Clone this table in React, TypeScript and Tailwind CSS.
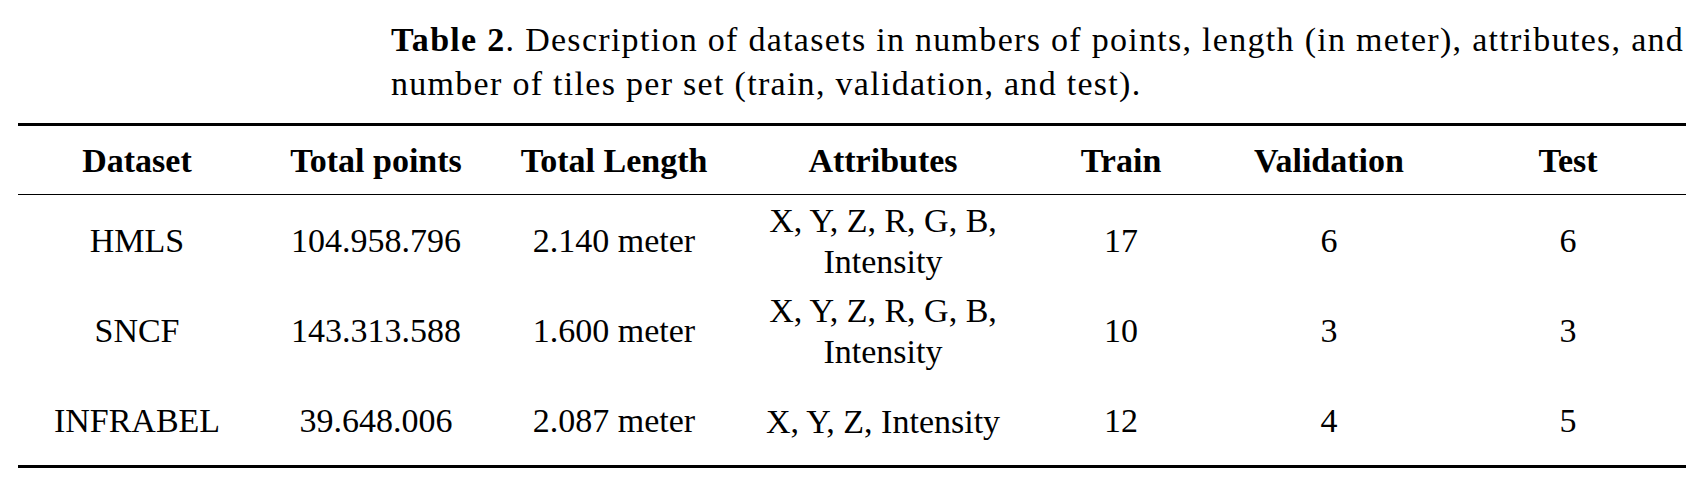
const columns = [
  { key: 'dataset', label: 'Dataset' },
  { key: 'points', label: 'Total points' },
  { key: 'length', label: 'Total Length' },
  { key: 'attributes', label: 'Attributes' },
  { key: 'train', label: 'Train' },
  { key: 'validation', label: 'Validation' },
  { key: 'test', label: 'Test' },
];

const rows = [
  {
    dataset: 'HMLS',
    points: '104.958.796',
    length: '2.140 meter',
    attributes: ['X, Y, Z, R, G, B,', 'Intensity'],
    train: '17',
    validation: '6',
    test: '6',
  },
  {
    dataset: 'SNCF',
    points: '143.313.588',
    length: '1.600 meter',
    attributes: ['X, Y, Z, R, G, B,', 'Intensity'],
    train: '10',
    validation: '3',
    test: '3',
  },
  {
    dataset: 'INFRABEL',
    points: '39.648.006',
    length: '2.087 meter',
    attributes: ['X, Y, Z, Intensity'],
    train: '12',
    validation: '4',
    test: '5',
  },
];

const grid =
  'grid grid-cols-[238px_240px_236px_302px_174px_242px_236px] text-center';

export default function App() {
  return (
    <div className="w-[1702px] h-[500px] bg-white text-black font-['Liberation_Serif',serif] overflow-hidden">
      <div className="pl-[391px] pt-[18px] text-[34px] leading-[44px] tracking-[0.038em]">
        <p className="whitespace-nowrap">
          <span className="font-bold">Table 2</span>. Description of datasets in numbers of points, length (in meter), attributes, and
        </p>
        <p className="whitespace-nowrap">number of tiles per set (train, validation, and test).</p>
      </div>

      <div className="mt-[17px] ml-[18px] w-[1668px] text-[34px] leading-[41px]">
        <div className="h-[3px] bg-black" />
        <div className={`${grid} h-[68px] items-center font-bold`}>
          {columns.map(col => (
            <div key={col.key}>{col.label}</div>
          ))}
        </div>
        <div className="h-px bg-black" />

        {rows.map(row => (
          <div key={row.dataset} className={`${grid} h-[90px] items-center`}>
            <div>{row.dataset}</div>
            <div>{row.points}</div>
            <div>{row.length}</div>
            <div className="flex flex-col pt-[2px]">
              {row.attributes.map(line => (
                <span key={line}>{line}</span>
              ))}
            </div>
            <div>{row.train}</div>
            <div>{row.validation}</div>
            <div>{row.test}</div>
          </div>
        ))}
        <div className="h-[3px] bg-black" />
      </div>
    </div>
  );
}
